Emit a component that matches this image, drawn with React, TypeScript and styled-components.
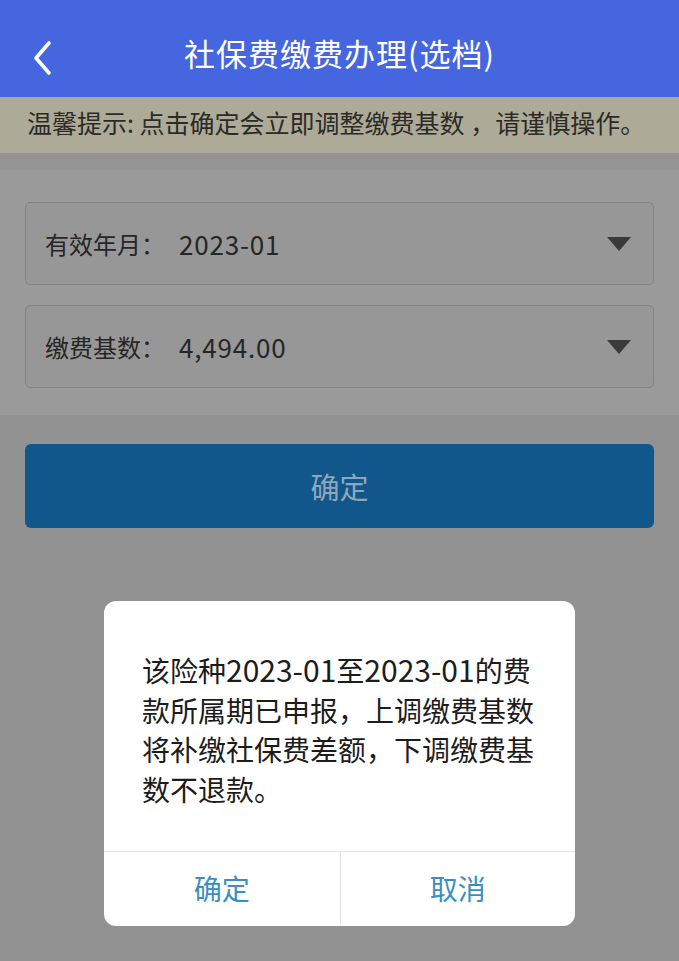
import React from "react";
import styled, { createGlobalStyle } from "styled-components";

const Global = createGlobalStyle`
  html, body { margin: 0; padding: 0; }
  body {
    background: #929292;
    font-family: "Noto Sans CJK SC", "Noto Sans", sans-serif;
    width: 679px;
    height: 961px;
    overflow: hidden;
  }
`;

const Page = styled.div`
  position: relative;
  width: 679px;
  height: 961px;
  background: #929292;
  display: flex;
  flex-direction: column;
`;

const Header = styled.header`
  height: 97px;
  box-sizing: border-box;
  padding-top: 8px;
  background: #4566de;
  display: flex;
  align-items: center;
  justify-content: center;
  position: relative;
  flex-shrink: 0;
`;

const BackButton = styled.button`
  position: absolute;
  left: 26px;
  top: 38px;
  width: 34px;
  height: 40px;
  border: none;
  background: transparent;
  padding: 0;
  display: flex;
  align-items: center;
  justify-content: center;
`;

const Title = styled.h1`
  margin: 0;
  color: #ffffff;
  font-size: 31px;
  font-weight: 400;
  letter-spacing: 1px;
`;

const Tip = styled.div`
  height: 56px;
  box-sizing: border-box;
  background: #adaa97;
  color: #2b2a26;
  font-size: 25px;
  display: flex;
  align-items: center;
  padding: 0 0 7px 27px;
  box-shadow: 0 6px 8px rgba(150, 150, 150, 0.6);
`;

const Gap = styled.div`
  height: 17px;
  background: #949494;
`;

const Form = styled.section`
  background: #9a9a9a;
  padding: 32px 25px 27px;
  display: flex;
  flex-direction: column;
  gap: 20px;
`;

const Field = styled.div`
  height: 83px;
  box-sizing: border-box;
  border: 1px solid #848484;
  border-radius: 5px;
  background: #979797;
  display: flex;
  align-items: center;
  justify-content: space-between;
  padding: 0 22px 0 19px;
`;

const FieldText = styled.span`
  color: #262626;
  font-size: 24px;
  display: flex;
  align-items: center;
`;

const FieldValue = styled.span`
  font-size: 26px;
  letter-spacing: 0.8px;
  margin-left: 14px;
`;

const Caret = styled.span`
  width: 0;
  height: 0;
  border-left: 12px solid transparent;
  border-right: 12px solid transparent;
  border-top: 14px solid #3a3a3a;
`;

const Actions = styled.div`
  padding: 29px 25px 0;
`;

const Submit = styled.button`
  width: 100%;
  height: 84px;
  border: none;
  border-radius: 6px;
  background: #11578b;
  color: #8ea7bb;
  font-family: inherit;
  font-size: 29px;
  display: flex;
  align-items: center;
  justify-content: center;
`;

const Overlay = styled.div`
  position: absolute;
  left: 0;
  right: 0;
  top: 601px;
  display: flex;
  justify-content: center;
`;

const Dialog = styled.div`
  width: 471px;
  background: #ffffff;
  border-radius: 12px;
  overflow: hidden;
`;

const Message = styled.p`
  margin: 0;
  padding: 49px 33px 42px 38px;
  font-size: 28px;
  line-height: 39.5px;
  color: #1c1c1c;
  word-break: break-all;
`;

const Num = styled.span`
  font-size: 30px;
`;

const ButtonRow = styled.div`
  display: grid;
  grid-template-columns: 1fr 1fr;
  border-top: 1px solid #e6e6e6;
  height: 74px;
`;

const DialogButton = styled.button<{ $divider?: boolean }>`
  border: none;
  background: transparent;
  border-left: ${(p) => (p.$divider ? "1px solid #e6e6e6" : "none")};
  color: #3b8ec3;
  font-family: inherit;
  font-size: 28px;
  display: flex;
  align-items: center;
  justify-content: center;
  padding: 0 0 2px;
`;

export default function App() {
  return (
    <>
      <Global />
      <Page>
        <Header>
          <BackButton aria-label="back">
            <svg width="22" height="36" viewBox="0 0 22 36">
              <path
                d="M17 3 L4 18 L17 33"
                fill="none"
                stroke="#ffffff"
                strokeWidth="3.6"
                strokeLinecap="round"
                strokeLinejoin="round"
              />
            </svg>
          </BackButton>
          <Title>社保费缴费办理(选档)</Title>
        </Header>
        <Tip>温馨提示: 点击确定会立即调整缴费基数 ，请谨慎操作。</Tip>
        <Gap />
        <Form>
          <Field>
            <FieldText>
              有效年月：<FieldValue>2023-01</FieldValue>
            </FieldText>
            <Caret />
          </Field>
          <Field>
            <FieldText>
              缴费基数：<FieldValue>4,494.00</FieldValue>
            </FieldText>
            <Caret />
          </Field>
        </Form>
        <Actions>
          <Submit>确定</Submit>
        </Actions>
        <Overlay>
          <Dialog>
            <Message>
              该险种<Num>2023-01</Num>至<Num>2023-01</Num>的费款所属期已申报，上调缴费基数将补缴社保费差额，下调缴费基数不退款。
            </Message>
            <ButtonRow>
              <DialogButton>确定</DialogButton>
              <DialogButton $divider>取消</DialogButton>
            </ButtonRow>
          </Dialog>
        </Overlay>
      </Page>
    </>
  );
}
